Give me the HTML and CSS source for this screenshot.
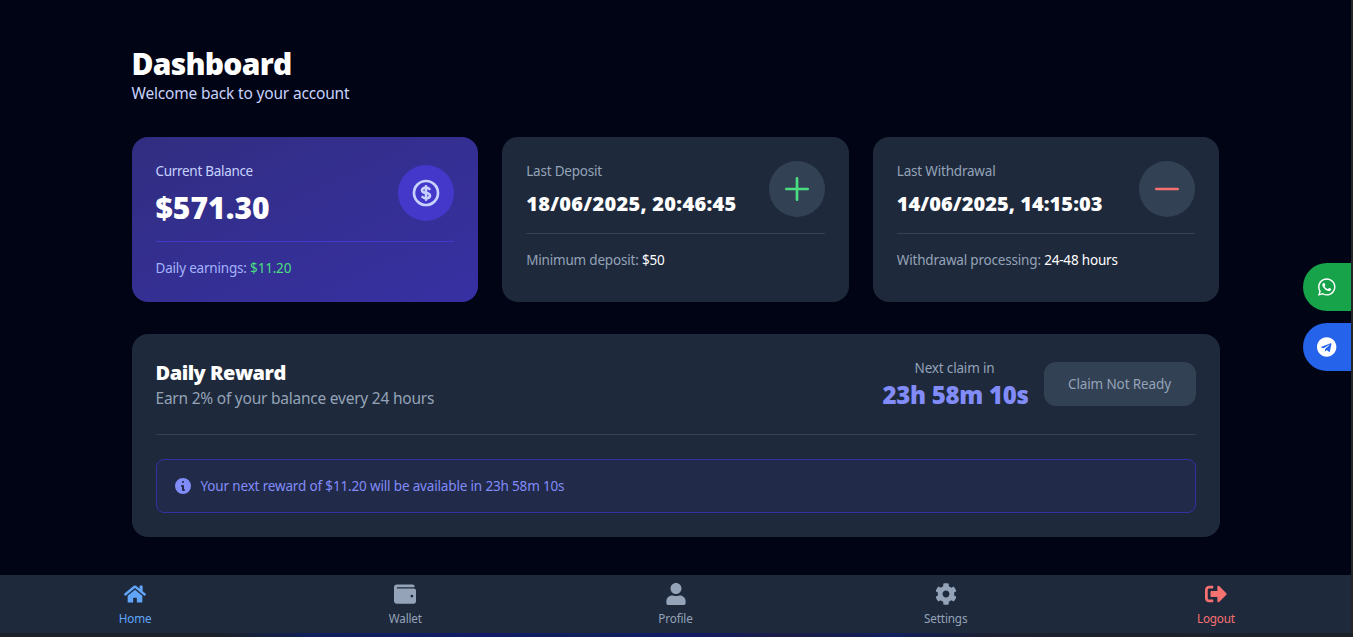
FILE: index.html
```html
<!DOCTYPE html>
<html lang="en">
<head>
<meta charset="utf-8">
<title>Dashboard</title>
<link rel="stylesheet" href="styles.css">
</head>
<body>
<div class="page">
  <main class="container">
    <header class="intro">
      <h1 class="title">Dashboard</h1>
      <p class="subtitle">Welcome back to your account</p>
    </header>

    <section class="cards">
      <article class="card card-balance">
        <div class="card-head">
          <div>
            <p class="label l-balance">Current Balance</p>
            <p class="amount">$571.30</p>
          </div>
          <div class="disc"><svg viewBox="0 0 24 24" class="line-icon"><path d="M12 8c-1.657 0-3 .895-3 2s1.343 2 3 2 3 .895 3 2-1.343 2-3 2m0-8c1.11 0 2.08.402 2.599 1M12 8V7m0 1v8m0 0v1m0-1c-1.11 0-2.08-.402-2.599-1M21 12a9 9 0 11-18 0 9 9 0 0118 0z"/></svg></div>
        </div>
        <p class="card-foot">Daily earnings: <span class="green">$11.20</span></p>
      </article>

      <article class="card">
        <div class="card-head">
          <div>
            <p class="label">Last Deposit</p>
            <p class="date d-deposit">18/06/2025, 20:46:45</p>
          </div>
          <div class="disc disc-plus"><svg viewBox="0 0 24 24" class="line-icon"><path d="M12 4v16m8-8H4"/></svg></div>
        </div>
        <p class="card-foot">Minimum deposit: <span class="white">$50</span></p>
      </article>

      <article class="card">
        <div class="card-head">
          <div>
            <p class="label">Last Withdrawal</p>
            <p class="date d-withdraw">14/06/2025, 14:15:03</p>
          </div>
          <div class="disc disc-minus"><svg viewBox="0 0 24 24" class="line-icon"><path d="M20 12H4"/></svg></div>
        </div>
        <p class="card-foot">Withdrawal processing: <span class="white">24-48 hours</span></p>
      </article>
    </section>

    <section class="reward">
      <div class="reward-head">
        <div>
          <h2 class="reward-title">Daily Reward</h2>
          <p class="reward-sub">Earn 2% of your balance every 24 hours</p>
        </div>
        <div class="claim">
          <div class="timer">
            <p class="timer-label">Next claim in</p>
            <p class="timer-value">23h 58m 10s</p>
          </div>
          <button class="claim-btn" disabled>Claim Not Ready</button>
        </div>
      </div>
      <div class="reward-body">
        <div class="notice">
          <svg viewBox="0 0 20 20" class="info"><path fill-rule="evenodd" d="M18 10a8 8 0 11-16 0 8 8 0 0116 0zm-7-4a1 1 0 11-2 0 1 1 0 012 0zM9 9a1 1 0 000 2v3a1 1 0 001 1h1a1 1 0 100-2v-3a1 1 0 00-1-1H9z"/></svg>
          <p class="notice-text">Your next reward of $11.20 will be available in 23h 58m 10s</p>
        </div>
      </div>
    </section>
  </main>

  <nav class="nav">
    <a class="nav-item active"><svg viewBox="0 0 576 512"><path d="M280.37 148.26L96 300.11V464a16 16 0 0 0 16 16l112.06-.29a16 16 0 0 0 15.92-16V368a16 16 0 0 1 16-16h64a16 16 0 0 1 16 16v95.64a16 16 0 0 0 16 16.05L464 480a16 16 0 0 0 16-16V300L295.67 148.26a12.19 12.19 0 0 0-15.3 0zM571.6 251.47L488 182.56V44.05a12 12 0 0 0-12-12h-56a12 12 0 0 0-12 12v72.61L318.47 43a48 48 0 0 0-61 0L4.34 251.47a12 12 0 0 0-1.6 16.9l25.5 31A12 12 0 0 0 45.15 301l235.22-193.74a12.19 12.19 0 0 1 15.3 0L530.9 301a12 12 0 0 0 16.9-1.6l25.5-31a12 12 0 0 0-1.7-16.93z"/></svg><span>Home</span></a>
    <a class="nav-item"><svg viewBox="0 0 512 512"><path d="M461.2 128H80c-8.84 0-16-7.16-16-16s7.16-16 16-16h384c8.84 0 16-7.16 16-16 0-26.51-21.49-48-48-48H64C28.65 32 0 60.65 0 96v320c0 35.35 28.65 64 64 64h397.2c28.02 0 50.8-21.53 50.8-48V176c0-26.47-22.78-48-50.8-48zM416 336c-17.67 0-32-14.33-32-32s14.33-32 32-32 32 14.33 32 32-14.33 32-32 32z"/></svg><span>Wallet</span></a>
    <a class="nav-item"><svg viewBox="0 0 448 512"><path d="M224 256c70.7 0 128-57.3 128-128S294.7 0 224 0 96 57.3 96 128s57.3 128 128 128zm89.6 32h-16.7c-22.2 10.2-46.9 16-72.9 16s-50.6-5.8-72.9-16h-16.7C60.2 288 0 348.2 0 422.4V464c0 26.5 21.5 48 48 48h352c26.5 0 48-21.5 48-48v-41.6c0-74.2-60.2-134.4-134.4-134.4z"/></svg><span>Profile</span></a>
    <a class="nav-item"><svg viewBox="0 0 512 512"><path d="M487.4 315.7l-42.6-24.6c4.3-23.2 4.3-47 0-70.2l42.6-24.6c4.9-2.8 7.1-8.6 5.5-14-11.1-35.6-30-67.8-54.7-94.6-3.8-4.1-10-5.1-14.8-2.3L380.8 110c-17.9-15.4-38.5-27.3-60.8-35.1V25.8c0-5.6-3.9-10.5-9.4-11.7-36.7-8.2-74.3-7.8-109.2 0-5.5 1.2-9.4 6.1-9.4 11.7V75c-22.2 7.9-42.8 19.8-60.8 35.1L88.7 85.5c-4.9-2.8-11-1.9-14.8 2.3-24.7 26.7-43.6 58.9-54.7 94.6-1.7 5.4.6 11.2 5.5 14L67.3 221c-4.3 23.2-4.3 47 0 70.2l-42.6 24.6c-4.9 2.8-7.1 8.6-5.5 14 11.1 35.6 30 67.8 54.7 94.6 3.8 4.1 10 5.1 14.8 2.3l42.6-24.6c17.9 15.4 38.5 27.3 60.8 35.1v49.2c0 5.6 3.9 10.5 9.4 11.7 36.7 8.2 74.3 7.8 109.2 0 5.5-1.2 9.4-6.1 9.4-11.7v-49.2c22.2-7.9 42.8-19.8 60.8-35.1l42.6 24.6c4.9 2.8 11 1.9 14.8-2.3 24.7-26.7 43.6-58.9 54.7-94.6 1.5-5.5-.7-11.3-5.6-14.1zM256 336c-44.1 0-80-35.9-80-80s35.9-80 80-80 80 35.9 80 80-35.9 80-80 80z"/></svg><span>Settings</span></a>
    <a class="nav-item logout"><svg viewBox="0 0 512 512"><path d="M497 273L329 441c-15 15-41 4.5-41-17v-96H152c-13.3 0-24-10.7-24-24v-96c0-13.3 10.7-24 24-24h136V88c0-21.4 25.9-32 41-17l168 168c9.3 9.4 9.3 24.6 0 34zM192 436v-40c0-6.6-5.4-12-12-12H96c-17.7 0-32-14.3-32-32V160c0-17.7 14.3-32 32-32h84c6.6 0 12-5.4 12-12V76c0-6.6-5.4-12-12-12H96c-53 0-96 43-96 96v192c0 53 43 96 96 96h84c6.6 0 12-5.4 12-12z"/></svg><span>Logout</span></a>
  </nav>
</div>
<div class="strip"></div>

<div class="contacts">
  <a class="contact whatsapp"><svg viewBox="0 0 448 512"><path d="M380.9 97.1C339 55.1 283.2 32 223.9 32c-122.4 0-222 99.6-222 222 0 39.1 10.2 77.3 29.6 111L0 480l117.7-30.9c32.4 17.7 68.9 27 106.1 27h.1c122.3 0 224.1-99.6 224.1-222 0-59.3-25.2-115-67.1-157zm-157 341.6c-33.2 0-65.7-8.9-94-25.7l-6.7-4-69.8 18.3L72 359.2l-4.4-7c-18.5-29.4-28.2-63.3-28.2-98.2 0-101.7 82.8-184.5 184.6-184.5 49.3 0 95.6 19.2 130.4 54.1 34.8 34.9 56.2 81.2 56.1 130.5 0 101.8-84.9 184.6-186.6 184.6zm101.2-138.2c-5.5-2.8-32.8-16.2-37.9-18-5.1-1.9-8.8-2.8-12.5 2.8-3.7 5.6-14.3 18-17.6 21.8-3.2 3.7-6.5 4.2-12 1.4-32.6-16.3-54-29.1-75.5-66-5.7-9.8 5.7-9.1 16.3-30.3 1.8-3.7.9-6.9-.5-9.7-1.4-2.8-12.5-30.1-17.1-41.2-4.5-10.8-9.1-9.3-12.5-9.5-3.2-.2-6.9-.2-10.6-.2-3.7 0-9.7 1.4-14.8 6.9-5.1 5.6-19.4 19-19.4 46.3 0 27.3 19.9 53.7 22.6 57.4 2.8 3.7 39.1 59.7 94.8 83.8 35.2 15.2 49 16.5 66.6 13.9 10.7-1.6 32.8-13.4 37.4-26.4 4.6-13 4.6-24.1 3.2-26.4-1.3-2.5-5-3.9-10.5-6.6z"/></svg></a>
  <a class="contact telegram"><svg viewBox="0 0 496 512"><path d="M248 8C111 8 0 119 0 256s111 248 248 248 248-111 248-248S385 8 248 8zm121.8 169.9l-40.7 191.8c-3 13.6-11.1 16.9-22.4 10.5l-62-45.7-29.9 28.8c-3.3 3.3-6.1 6.1-12.5 6.1l4.4-63.1 114.9-103.8c5-4.4-1.1-6.9-7.7-2.5l-142 89.4-61.2-19.1c-13.3-4.2-13.6-13.3 2.8-19.7l239.1-92.2c11.1-4 20.8 2.7 17.2 19.5z"/></svg></a>
</div>
</body>
</html>
```
FILE: styles.css
```css
* { box-sizing: border-box; margin: 0; padding: 0; }

body {
  width: 1353px;
  height: 637px;
  overflow: hidden;
  background: #23262b;
  font-family: "Noto Sans", "Open Sans", sans-serif;
  color: #fff;
}
p, h1, h2, span { white-space: nowrap; }
svg { display: block; fill: currentColor; }

.page {
  display: flex;
  flex-direction: column;
  width: 1351px;
  height: 633px;
  background: #010414;
}
.strip {
  height: 4px;
  background: linear-gradient(to right, #1c2127 0, #1c2127 16%, #10205a 23%, #111a68 36%, #102158 43%, #111a68 50%, #1b1d45 58%, #111f5c 66%, #1c2030 73%, #1c2127 100%);
}
.container {
  flex: 1;
  width: 1088px;
  margin: 0 auto;
  padding-top: 46px;
}

.title { font-family: "Open Sans", sans-serif; font-size: 30px; font-weight: 800; line-height: 36px; letter-spacing: -.75px; }
.subtitle { font-size: 15.5px; line-height: 23px; color: #c7d2fe; letter-spacing: -.18px; }
.intro { margin-bottom: 32px; }

.cards { display: grid; grid-template-columns: repeat(3, 1fr); gap: 24px; }
.card { height: 165px; padding: 24px; border-radius: 16px; background: #1e293b; }
.card-balance { background: linear-gradient(to bottom right, #312e81, #3730a3); }
.card-head { display: flex; justify-content: space-between; align-items: center; }
.label { font-size: 13.5px; line-height: 20px; color: #94a3b8; margin-bottom: 8px; letter-spacing: -.2px; }
.card-balance .label { color: #c7d2fe; }
.card-balance .l-balance { letter-spacing: -.3px; }
.amount { font-family: "Open Sans", sans-serif; font-size: 30px; font-weight: 800; line-height: 38px; height: 36px; letter-spacing: .05px; }
.date { font-family: "Open Sans", sans-serif; font-size: 20px; font-weight: 800; line-height: 30px; height: 28px; }
.d-deposit { letter-spacing: .28px; }
.d-withdraw { letter-spacing: .05px; }
.disc {
  display: flex;
  align-items: center;
  justify-content: center;
  width: 56px;
  height: 56px;
  border-radius: 50%;
  background: #4338ca;
  color: #c7d2fe;
}
.disc-plus { background: #334155; color: #4ade80; }
.disc-minus { background: #334155; color: #f87171; }
.line-icon { width: 32px; height: 32px; fill: none; stroke: currentColor; stroke-width: 2; stroke-linecap: round; stroke-linejoin: round; }
.card-foot {
  margin-top: 16px;
  padding-top: 16px;
  border-top: 1px solid #334155;
  font-size: 13.5px;
  line-height: 20px;
  letter-spacing: -.19px;
  color: #94a3b8;
}
.card-balance .card-foot { border-color: #4338ca; color: #a5b4fc; }
.green { color: #4ade80; }
.white { color: #fff; }

.reward { margin-top: 32px; height: 203px; padding: 24px; border-radius: 16px; background: #1e293b; }
.reward-head { display: flex; justify-content: space-between; align-items: center; height: 52px; }
.reward-title { font-family: "Open Sans", sans-serif; font-size: 20px; font-weight: 800; line-height: 30px; height: 28px; letter-spacing: -.5px; }
.reward-sub { font-size: 15.5px; line-height: 24px; color: #94a3b8; letter-spacing: -.23px; }
.claim { display: flex; align-items: center; gap: 16px; }
.timer { text-align: center; width: 146px; }
.timer-label { font-size: 13.5px; line-height: 20px; color: #94a3b8; letter-spacing: -.18px; }
.timer-value { font-family: "Open Sans", sans-serif; font-size: 24px; font-weight: 800; line-height: 34px; height: 32px; padding-left: 1px; color: #818cf8; letter-spacing: -.3px; }
.claim-btn {
  width: 152px;
  height: 44px;
  border: 0;
  border-radius: 12px;
  background: #334155;
  color: #94a3b8;
  font: 13.5px/20px "Noto Sans", "Open Sans", sans-serif;
  letter-spacing: -.12px;
}
.reward-body { margin-top: 24px; padding-top: 24px; border-top: 1px solid #334155; }
.notice {
  display: flex;
  align-items: center;
  gap: 8px;
  height: 54px;
  padding: 0 16px;
  border: 1px solid #3730a3;
  border-radius: 8px;
  background: #222a4a;
  color: #818cf8;
}
.info { width: 20px; height: 20px; }
.notice-text { font-size: 13.5px; line-height: 20px; letter-spacing: -.16px; }

.nav { display: flex; height: 58px; background: #1e293b; }
.nav-item {
  flex: 1;
  display: flex;
  flex-direction: column;
  align-items: center;
  gap: 5px;
  padding-top: 8px;
  font-size: 11.7px;
  line-height: 16px;
  letter-spacing: -.15px;
  color: #94a3b8;
}
.nav-item svg { width: 22px; height: 22px; }
.active { color: #60a5fa; }
.logout { color: #f87171; }

/* Contact tabs float over the page's right edge */
.contacts {
  position: absolute;
  top: 263px;
  left: 1303px;
  display: flex;
  flex-direction: column;
  gap: 12px;
}
.contact { display: flex; align-items: center; justify-content: center; width: 48px; height: 48px; border-radius: 24px 0 0 24px; }
.contact svg { height: 20px; }
.whatsapp { background: #16a34a; }
.telegram { background: #2563eb; }
```
